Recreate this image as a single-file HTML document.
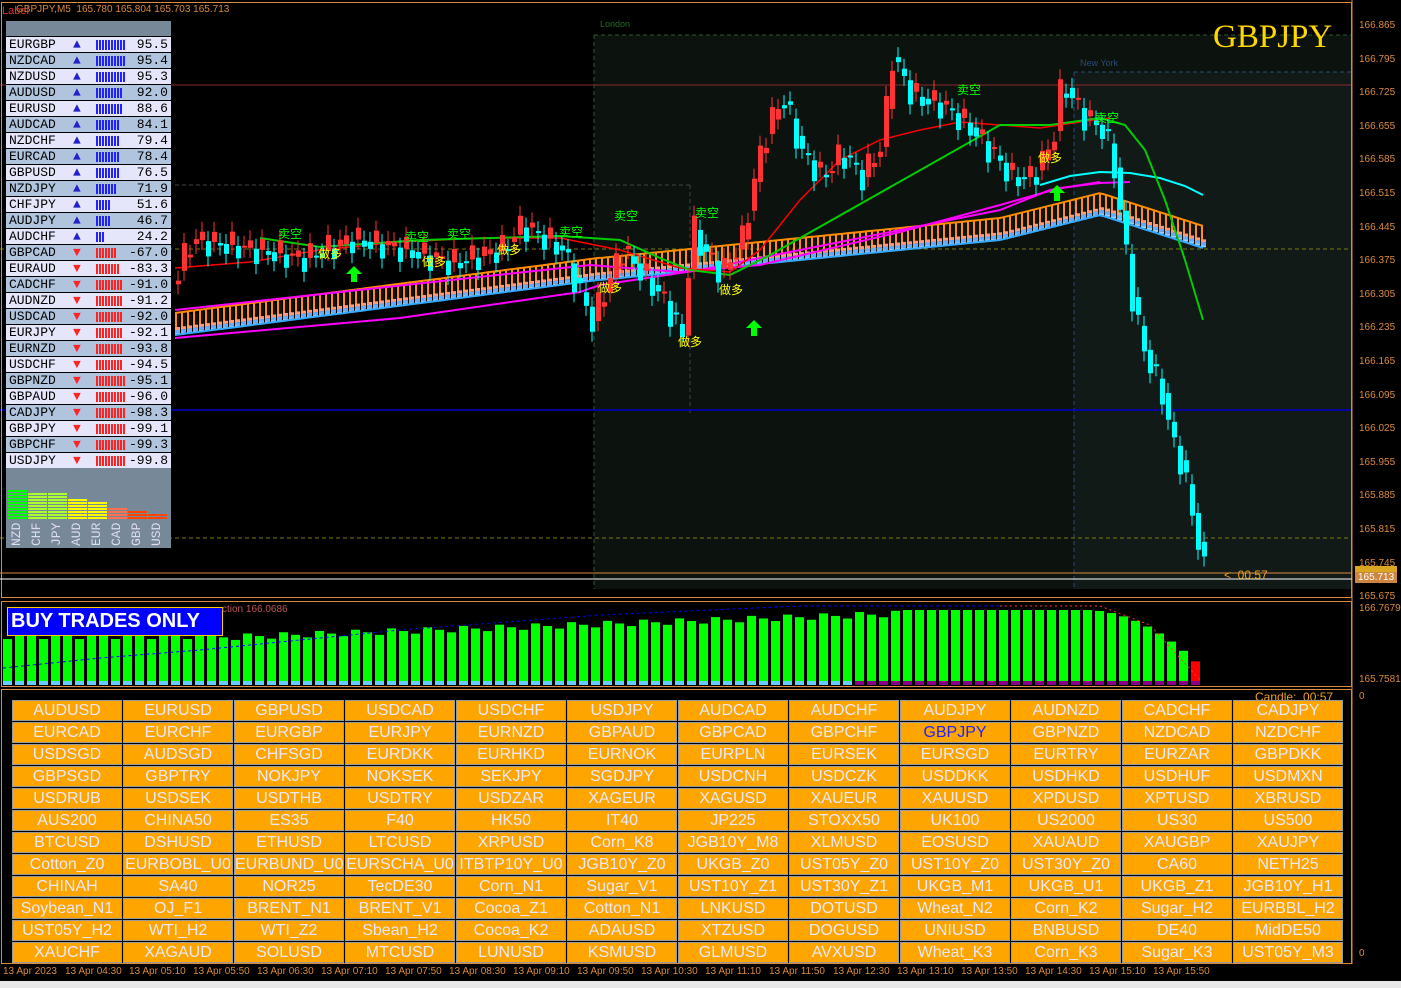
<!DOCTYPE html>
<html><head><meta charset="utf-8"><style>
body{margin:0;background:#000;width:1401px;height:988px;overflow:hidden;position:relative;font-family:"Liberation Sans",sans-serif}
#c{position:absolute;left:0;top:0}
.pn{position:absolute;left:6px;top:21px;width:165px;height:527px;background:#778899}
.r{position:absolute;left:0;width:165px;height:15px;border-top:1px solid #000;font:13px "Liberation Mono",monospace;color:#000;line-height:15px}
.r .n{position:absolute;left:3px}.r .v{position:absolute;right:3px}
.r .b{position:absolute;left:90px;top:3px;height:10px}
.r .a{position:absolute;left:67px;top:0px;font-size:13px}
.grid{position:absolute;left:0;top:698px;width:1352px;height:266px}
.btn{position:absolute;width:108px;height:19px;background:#FFA500;color:#e8e8f8;font-size:16px;line-height:19px;text-align:center;border:1px solid #999;white-space:nowrap;overflow:hidden}
.ax{position:absolute;left:1359px;font-size:10px;color:#d98a3c}
.tx{position:absolute;top:966px;font-size:10px;color:#d98a3c}
</style></head><body>
<svg id="c" width="1401" height="988"></svg>
<div style="position:absolute;left:16px;top:4px;font-size:10px;color:#d98a3c">GBPJPY,M5&nbsp; 165.780 165.804 165.703 165.713</div>
<div style="position:absolute;left:2px;top:5px;font-size:11px;color:#d33">Label</div>
<div style="position:absolute;left:1213px;top:19px;font:33px 'Liberation Serif',serif;color:#ffd700">GBPJPY</div>
<div style="position:absolute;left:600px;top:19px;font-size:9px;color:#2a6a2a">London</div>
<div style="position:absolute;left:1080px;top:58px;font-size:9px;color:#2a4a7a">New York</div>
<div style="position:absolute;left:1224px;top:568px;font-size:12px;color:#f0a020">&lt;&nbsp; 00:57</div>
<div class="pn" id="pn"></div>
<div style="position:absolute;left:7px;top:607px;width:211px;height:27px;background:#0000ff;border:1px solid #fc0;color:#fff;font:bold 20px 'Liberation Sans',sans-serif;line-height:27px;padding-left:3px">BUY TRADES ONLY</div>
<div style="position:absolute;left:222px;top:604px;font-size:10px;color:#b55">ction 166.0686</div>
<div style="position:absolute;left:1255px;top:690px;font-size:12px;color:#f0a020">Candle:&nbsp; 00:57</div>
<div class="grid" id="g">
<div class="btn" style="left:12px;top:2px">AUDUSD</div><div class="btn" style="left:123px;top:2px">EURUSD</div><div class="btn" style="left:234px;top:2px">GBPUSD</div><div class="btn" style="left:345px;top:2px">USDCAD</div><div class="btn" style="left:456px;top:2px">USDCHF</div><div class="btn" style="left:567px;top:2px">USDJPY</div><div class="btn" style="left:678px;top:2px">AUDCAD</div><div class="btn" style="left:789px;top:2px">AUDCHF</div><div class="btn" style="left:900px;top:2px">AUDJPY</div><div class="btn" style="left:1011px;top:2px">AUDNZD</div><div class="btn" style="left:1122px;top:2px">CADCHF</div><div class="btn" style="left:1233px;top:2px">CADJPY</div>
<div class="btn" style="left:12px;top:24px">EURCAD</div><div class="btn" style="left:123px;top:24px">EURCHF</div><div class="btn" style="left:234px;top:24px">EURGBP</div><div class="btn" style="left:345px;top:24px">EURJPY</div><div class="btn" style="left:456px;top:24px">EURNZD</div><div class="btn" style="left:567px;top:24px">GBPAUD</div><div class="btn" style="left:678px;top:24px">GBPCAD</div><div class="btn" style="left:789px;top:24px">GBPCHF</div><div class="btn" style="left:900px;top:24px;color:#22f">GBPJPY</div><div class="btn" style="left:1011px;top:24px">GBPNZD</div><div class="btn" style="left:1122px;top:24px">NZDCAD</div><div class="btn" style="left:1233px;top:24px">NZDCHF</div>
<div class="btn" style="left:12px;top:46px">USDSGD</div><div class="btn" style="left:123px;top:46px">AUDSGD</div><div class="btn" style="left:234px;top:46px">CHFSGD</div><div class="btn" style="left:345px;top:46px">EURDKK</div><div class="btn" style="left:456px;top:46px">EURHKD</div><div class="btn" style="left:567px;top:46px">EURNOK</div><div class="btn" style="left:678px;top:46px">EURPLN</div><div class="btn" style="left:789px;top:46px">EURSEK</div><div class="btn" style="left:900px;top:46px">EURSGD</div><div class="btn" style="left:1011px;top:46px">EURTRY</div><div class="btn" style="left:1122px;top:46px">EURZAR</div><div class="btn" style="left:1233px;top:46px">GBPDKK</div>
<div class="btn" style="left:12px;top:68px">GBPSGD</div><div class="btn" style="left:123px;top:68px">GBPTRY</div><div class="btn" style="left:234px;top:68px">NOKJPY</div><div class="btn" style="left:345px;top:68px">NOKSEK</div><div class="btn" style="left:456px;top:68px">SEKJPY</div><div class="btn" style="left:567px;top:68px">SGDJPY</div><div class="btn" style="left:678px;top:68px">USDCNH</div><div class="btn" style="left:789px;top:68px">USDCZK</div><div class="btn" style="left:900px;top:68px">USDDKK</div><div class="btn" style="left:1011px;top:68px">USDHKD</div><div class="btn" style="left:1122px;top:68px">USDHUF</div><div class="btn" style="left:1233px;top:68px">USDMXN</div>
<div class="btn" style="left:12px;top:90px">USDRUB</div><div class="btn" style="left:123px;top:90px">USDSEK</div><div class="btn" style="left:234px;top:90px">USDTHB</div><div class="btn" style="left:345px;top:90px">USDTRY</div><div class="btn" style="left:456px;top:90px">USDZAR</div><div class="btn" style="left:567px;top:90px">XAGEUR</div><div class="btn" style="left:678px;top:90px">XAGUSD</div><div class="btn" style="left:789px;top:90px">XAUEUR</div><div class="btn" style="left:900px;top:90px">XAUUSD</div><div class="btn" style="left:1011px;top:90px">XPDUSD</div><div class="btn" style="left:1122px;top:90px">XPTUSD</div><div class="btn" style="left:1233px;top:90px">XBRUSD</div>
<div class="btn" style="left:12px;top:112px">AUS200</div><div class="btn" style="left:123px;top:112px">CHINA50</div><div class="btn" style="left:234px;top:112px">ES35</div><div class="btn" style="left:345px;top:112px">F40</div><div class="btn" style="left:456px;top:112px">HK50</div><div class="btn" style="left:567px;top:112px">IT40</div><div class="btn" style="left:678px;top:112px">JP225</div><div class="btn" style="left:789px;top:112px">STOXX50</div><div class="btn" style="left:900px;top:112px">UK100</div><div class="btn" style="left:1011px;top:112px">US2000</div><div class="btn" style="left:1122px;top:112px">US30</div><div class="btn" style="left:1233px;top:112px">US500</div>
<div class="btn" style="left:12px;top:134px">BTCUSD</div><div class="btn" style="left:123px;top:134px">DSHUSD</div><div class="btn" style="left:234px;top:134px">ETHUSD</div><div class="btn" style="left:345px;top:134px">LTCUSD</div><div class="btn" style="left:456px;top:134px">XRPUSD</div><div class="btn" style="left:567px;top:134px">Corn_K8</div><div class="btn" style="left:678px;top:134px">JGB10Y_M8</div><div class="btn" style="left:789px;top:134px">XLMUSD</div><div class="btn" style="left:900px;top:134px">EOSUSD</div><div class="btn" style="left:1011px;top:134px">XAUAUD</div><div class="btn" style="left:1122px;top:134px">XAUGBP</div><div class="btn" style="left:1233px;top:134px">XAUJPY</div>
<div class="btn" style="left:12px;top:156px">Cotton_Z0</div><div class="btn" style="left:123px;top:156px">EURBOBL_U0</div><div class="btn" style="left:234px;top:156px">EURBUND_U0</div><div class="btn" style="left:345px;top:156px">EURSCHA_U0</div><div class="btn" style="left:456px;top:156px">ITBTP10Y_U0</div><div class="btn" style="left:567px;top:156px">JGB10Y_Z0</div><div class="btn" style="left:678px;top:156px">UKGB_Z0</div><div class="btn" style="left:789px;top:156px">UST05Y_Z0</div><div class="btn" style="left:900px;top:156px">UST10Y_Z0</div><div class="btn" style="left:1011px;top:156px">UST30Y_Z0</div><div class="btn" style="left:1122px;top:156px">CA60</div><div class="btn" style="left:1233px;top:156px">NETH25</div>
<div class="btn" style="left:12px;top:178px">CHINAH</div><div class="btn" style="left:123px;top:178px">SA40</div><div class="btn" style="left:234px;top:178px">NOR25</div><div class="btn" style="left:345px;top:178px">TecDE30</div><div class="btn" style="left:456px;top:178px">Corn_N1</div><div class="btn" style="left:567px;top:178px">Sugar_V1</div><div class="btn" style="left:678px;top:178px">UST10Y_Z1</div><div class="btn" style="left:789px;top:178px">UST30Y_Z1</div><div class="btn" style="left:900px;top:178px">UKGB_M1</div><div class="btn" style="left:1011px;top:178px">UKGB_U1</div><div class="btn" style="left:1122px;top:178px">UKGB_Z1</div><div class="btn" style="left:1233px;top:178px">JGB10Y_H1</div>
<div class="btn" style="left:12px;top:200px">Soybean_N1</div><div class="btn" style="left:123px;top:200px">OJ_F1</div><div class="btn" style="left:234px;top:200px">BRENT_N1</div><div class="btn" style="left:345px;top:200px">BRENT_V1</div><div class="btn" style="left:456px;top:200px">Cocoa_Z1</div><div class="btn" style="left:567px;top:200px">Cotton_N1</div><div class="btn" style="left:678px;top:200px">LNKUSD</div><div class="btn" style="left:789px;top:200px">DOTUSD</div><div class="btn" style="left:900px;top:200px">Wheat_N2</div><div class="btn" style="left:1011px;top:200px">Corn_K2</div><div class="btn" style="left:1122px;top:200px">Sugar_H2</div><div class="btn" style="left:1233px;top:200px">EURBBL_H2</div>
<div class="btn" style="left:12px;top:222px">UST05Y_H2</div><div class="btn" style="left:123px;top:222px">WTI_H2</div><div class="btn" style="left:234px;top:222px">WTI_Z2</div><div class="btn" style="left:345px;top:222px">Sbean_H2</div><div class="btn" style="left:456px;top:222px">Cocoa_K2</div><div class="btn" style="left:567px;top:222px">ADAUSD</div><div class="btn" style="left:678px;top:222px">XTZUSD</div><div class="btn" style="left:789px;top:222px">DOGUSD</div><div class="btn" style="left:900px;top:222px">UNIUSD</div><div class="btn" style="left:1011px;top:222px">BNBUSD</div><div class="btn" style="left:1122px;top:222px">DE40</div><div class="btn" style="left:1233px;top:222px">MidDE50</div>
<div class="btn" style="left:12px;top:244px">XAUCHF</div><div class="btn" style="left:123px;top:244px">XAGAUD</div><div class="btn" style="left:234px;top:244px">SOLUSD</div><div class="btn" style="left:345px;top:244px">MTCUSD</div><div class="btn" style="left:456px;top:244px">LUNUSD</div><div class="btn" style="left:567px;top:244px">KSMUSD</div><div class="btn" style="left:678px;top:244px">GLMUSD</div><div class="btn" style="left:789px;top:244px">AVXUSD</div><div class="btn" style="left:900px;top:244px">Wheat_K3</div><div class="btn" style="left:1011px;top:244px">Corn_K3</div><div class="btn" style="left:1122px;top:244px">Sugar_K3</div><div class="btn" style="left:1233px;top:244px">UST05Y_M3</div>
</div>
<div class="ax" style="top:20px">166.865</div><div class="ax" style="top:54px">166.795</div><div class="ax" style="top:87px">166.725</div><div class="ax" style="top:121px">166.655</div><div class="ax" style="top:154px">166.585</div><div class="ax" style="top:188px">166.515</div><div class="ax" style="top:222px">166.445</div><div class="ax" style="top:255px">166.375</div><div class="ax" style="top:289px">166.305</div><div class="ax" style="top:322px">166.235</div><div class="ax" style="top:356px">166.165</div><div class="ax" style="top:390px">166.095</div><div class="ax" style="top:423px">166.025</div><div class="ax" style="top:457px">165.955</div><div class="ax" style="top:490px">165.885</div><div class="ax" style="top:524px">165.815</div><div class="ax" style="top:558px">165.745</div>
<div class="ax" style="top:566px;left:1355px;background:#daa520;color:#fff;padding:0 3px;width:36px;height:6px;overflow:hidden;line-height:6px"> </div>
<div class="ax" style="top:572px;left:1355px;background:#cd853f;color:#fff;padding:0 3px;line-height:11px">165.713</div>
<div class="ax" style="top:591px">165.675</div>
<div class="ax" style="top:603px">166.7679</div><div class="ax" style="top:674px">165.7581</div><div class="ax" style="top:691px">0</div><div class="ax" style="top:948px">0</div>
<div class="tx" style="left:3px">13 Apr 2023</div><div class="tx" style="left:65px">13 Apr 04:30</div><div class="tx" style="left:129px">13 Apr 05:10</div><div class="tx" style="left:193px">13 Apr 05:50</div><div class="tx" style="left:257px">13 Apr 06:30</div><div class="tx" style="left:321px">13 Apr 07:10</div><div class="tx" style="left:385px">13 Apr 07:50</div><div class="tx" style="left:449px">13 Apr 08:30</div><div class="tx" style="left:513px">13 Apr 09:10</div><div class="tx" style="left:577px">13 Apr 09:50</div><div class="tx" style="left:641px">13 Apr 10:30</div><div class="tx" style="left:705px">13 Apr 11:10</div><div class="tx" style="left:769px">13 Apr 11:50</div><div class="tx" style="left:833px">13 Apr 12:30</div><div class="tx" style="left:897px">13 Apr 13:10</div><div class="tx" style="left:961px">13 Apr 13:50</div><div class="tx" style="left:1025px">13 Apr 14:30</div><div class="tx" style="left:1089px">13 Apr 15:10</div><div class="tx" style="left:1153px">13 Apr 15:50</div>
<div style="position:absolute;left:0;top:981px;width:1401px;height:7px;background:#e8e8e8"></div>
<script>
var S=document.getElementById('c'),h='';
function Y(p){return 26+(166.865-p)*479.8}
function R(x,y,w,hh,f){h+='<rect x="'+x+'" y="'+y+'" width="'+w+'" height="'+hh+'" fill="'+f+'"/>'}
function L(x1,y1,x2,y2,s,w,d){h+='<line x1="'+x1+'" y1="'+y1+'" x2="'+x2+'" y2="'+y2+'" stroke="'+s+'" stroke-width="'+(w||1)+'"'+(d?' stroke-dasharray="'+d+'"':'')+'/>'}
R(594,35,758,554,'#0c120e');R(1074,72,278,517,'#121a18');
L(594,35,1352,35,'#2a5a2a',1,'4 3');L(594,35,594,589,'#2a5a2a',1,'4 3');
L(1074,72,1352,72,'#2a4a7a',1,'4 3');L(1074,72,1074,589,'#2a4a7a',1,'4 3');
L(175,185,690,185,'#444',1,'4 3');L(690,185,690,413,'#444',1,'4 3');
L(0,85,1352,85,'#8a2a2a');L(0,249,1352,249,'#7a7a10',1,'4 3');L(0,538,1352,538,'#7a7a10',1,'4 3');
L(0,410,1352,410,'#0000cc',1.5);
h+='<rect x="1.5" y="2.5" width="1350" height="595" fill="none" stroke="#d98a3c"/>';
L(0,573,1352,573,'#d98a3c');L(0,579,1352,579,'#fff');
h+='<rect x="1.5" y="601.5" width="1350" height="85" fill="none" stroke="#d98a3c"/>';
h+='<rect x="1.5" y="689.5" width="1350" height="274" fill="none" stroke="#d98a3c"/>';
L(1352,0,1352,964,'#d98a3c');
var k=[[175,166.35],[190,166.42],[250,166.40],[300,166.38],[350,166.42],[400,166.40],[450,166.37],[500,166.40],[520,166.45],[560,166.40],[590,166.25],[600,166.30],[620,166.40],[640,166.35],[660,166.30],[680,166.22],[690,166.45],[700,166.40],[720,166.35],[740,166.42],[760,166.62],[780,166.72],[800,166.60],[820,166.55],[840,166.60],[860,166.55],[880,166.62],[890,166.80],[910,166.72],[940,166.70],[970,166.65],[990,166.60],[1010,166.55],[1030,166.55],[1050,166.62],[1060,166.75],[1080,166.68],[1100,166.65],[1110,166.60],[1120,166.45],[1130,166.30],[1140,166.20],[1160,166.10],[1170,166.0],[1180,165.95],[1190,165.85],[1203,165.72]];
function P(x){for(var i=1;i<k.length;i++)if(x<=k[i][0]){var a=k[i-1],b=k[i];return a[1]+(b[1]-a[1])*(x-a[0])/(b[0]-a[0])}return 165.72}
function rib(x){if(x<600)return 325-(x-175)*0.13;if(x<1000)return 270-(x-600)*0.1;if(x<1100)return 230-(x-1000)*0.25;return 205+(x-1100)*0.32}
for(var x=175;x<1203;x+=6){var y=rib(x);R(x,y-12,2,22,'#ff8c1a');R(x+2,y-10,3,12,'#111');R(x,y+2,5,3,'#f97');R(x,y+5,5,3,'#6af');R(x,y+8,5,2,'#9cf')}
var pts=function(f,a,b){var s='';for(var x=a;x<=b;x+=4)s+=x+','+f(x).toFixed(1)+' ';return s};
h+='<polyline fill="none" stroke="#ff8c00" stroke-width="2" points="'+pts(function(x){return rib(x)-12},175,1203)+'"/>';
h+='<polyline fill="none" stroke="#3af" stroke-width="2" points="'+pts(function(x){return rib(x)+10},175,1203)+'"/>';
h+='<polyline fill="none" stroke="#f0f" stroke-width="2" points="175,338 400,318 580,292 600,285 700,270 800,250 1000,210 1050,190 1100,182"/>';
h+='<polyline fill="none" stroke="#f0f" stroke-width="2" points="175,310 590,265 680,272 760,265 900,232 1000,205 1060,188 1100,183 1130,182"/>';
h+='<polyline fill="none" stroke="#0ff" stroke-width="2" points="1040,185 1070,176 1100,172 1130,173 1160,178 1185,186 1203,195"/>';
h+='<polyline fill="none" stroke="#f00" stroke-width="1.5" points="175,268 250,262 320,250 400,242 480,238 560,238 620,250 680,268 730,272 760,250 800,200 840,160 880,140 920,130 960,122 1000,125 1040,128 1080,122 1110,118"/>';
h+='<polyline fill="none" stroke="#0c0" stroke-width="2" points="260,238 320,247 420,240 560,236 620,240 660,258 690,270 730,275 770,255 1000,125 1050,125 1100,118 1125,125 1145,150 1165,200 1185,260 1203,320"/>';
for(var x=176;x<1204;x+=6){var o=P(x-6),c=P(x)+(Math.sin(x*1.7)*0.03),up=c>o;var col=x>1100?'#0ff':(up?(x%12?'#f33':'#fa7050'):(x%12?'#0ff':'#1e90ff'));var t=Y(Math.max(o,c)),b=Y(Math.min(o,c));if(b-t<2)b=t+2;L(x+2,t-10,x+2,b+10,col);R(x,t,5,b-t,col)}
function ar(x,y){h+='<polygon points="'+x+','+y+' '+(x+8)+','+(y+8)+' '+(x+3)+','+(y+8)+' '+(x+3)+','+(y+16)+' '+(x-3)+','+(y+16)+' '+(x-3)+','+(y+8)+' '+(x-8)+','+(y+8)+'" fill="#0f0"/>'}
ar(354,266);ar(754,320);ar(1057,185);
var lb=[[278,238,'卖空','#0f0'],[405,241,'卖空','#0f0'],[447,238,'卖空','#0f0'],[559,236,'卖空','#0f0'],[614,220,'卖空','#0f0'],[695,217,'卖空','#0f0'],[957,94,'卖空','#0f0'],[1095,122,'卖空','#0f0'],[318,258,'做多','#ff0'],[422,266,'做多','#ff0'],[497,254,'做多','#ff0'],[598,292,'做多','#ff0'],[678,346,'做多','#ff0'],[719,294,'做多','#ff0'],[1038,162,'做多','#ff0']];
lb.forEach(function(a){h+='<text x="'+a[0]+'" y="'+a[1]+'" font-size="12" font-family="Noto Sans CJK SC,sans-serif" fill="'+a[3]+'">'+a[2]+'</text>'});
for(var x=3;x<1200;x+=12){var t;if(x<200)t=640-(x%36)/3;else if(x<900)t=635-(x-200)*0.035+((x*7)%9);else t=610+Math.pow(Math.max(0,x-1080)/120,2)*60;var col=x>1180?'#f00':'#0f0';R(x,t,9,684-t,col);R(x,681,9,4,x>850?'#808':'#6cf')}
h+='<polyline fill="none" stroke="#00f" stroke-dasharray="3 3" points="3,668 100,658 200,650 300,640 400,630 600,615 800,606 1000,606"/>';
h+='<polyline fill="none" stroke="#f33" stroke-dasharray="2 3" points="1000,606 1100,606 1150,625 1200,680"/>';
S.innerHTML=h;
var rows=[['EURGBP',95.5],['NZDCAD',95.4],['NZDUSD',95.3],['AUDUSD',92.0],['EURUSD',88.6],['AUDCAD',84.1],['NZDCHF',79.4],['EURCAD',78.4],['GBPUSD',76.5],['NZDJPY',71.9],['CHFJPY',51.6],['AUDJPY',46.7],['AUDCHF',24.2],['GBPCAD',-67.0],['EURAUD',-83.3],['CADCHF',-91.0],['AUDNZD',-91.2],['USDCAD',-92.0],['EURJPY',-92.1],['EURNZD',-93.8],['USDCHF',-94.5],['GBPNZD',-95.1],['GBPAUD',-96.0],['CADJPY',-98.3],['GBPJPY',-99.1],['GBPCHF',-99.3],['USDJPY',-99.8]];
var p='';rows.forEach(function(r,i){var pos=r[1]>0,n=Math.max(3,Math.round(Math.abs(r[1])/10));var bars='';for(var j=0;j<n;j++)bars+='<span style="position:absolute;left:'+(j*3)+'px;top:0;width:2px;height:10px;background:'+(pos?'#22f':'#f22')+'"></span>';
p+='<div class="r" style="top:'+(15+16*i)+'px;background:'+(i%2?'#b0c4de':'#e6e6fa')+'"><span class="n">'+r[0]+'</span><span class="a" style="color:'+(pos?'#22c':'#f22')+'">'+(pos?'▲':'▼')+'</span><span class="b">'+bars+'</span><span class="v">'+r[1].toFixed(1)+'</span></div>'});
var cur=[['NZD','#0f0',10],['CHF','#adff2f',9],['JPY','#adff2f',9],['AUD','#ff0',7],['EUR','#ff0',6],['CAD','#fa7050',4],['GBP','#f40',3],['USD','#f40',2]];
cur.forEach(function(c,i){for(var j=0;j<c[2];j++)p+='<div style="position:absolute;left:'+(2+i*20)+'px;top:'+(496-j*3)+'px;width:19px;height:2px;background:'+c[1]+'"></div>';p+='<div style="position:absolute;left:'+(3+i*20)+'px;top:525px;transform:rotate(-90deg);transform-origin:0 0;font:13px \'Liberation Mono\',monospace;color:#dde">'+c[0]+'</div>'});
document.getElementById('pn').innerHTML=p;
</script>
</body></html>
